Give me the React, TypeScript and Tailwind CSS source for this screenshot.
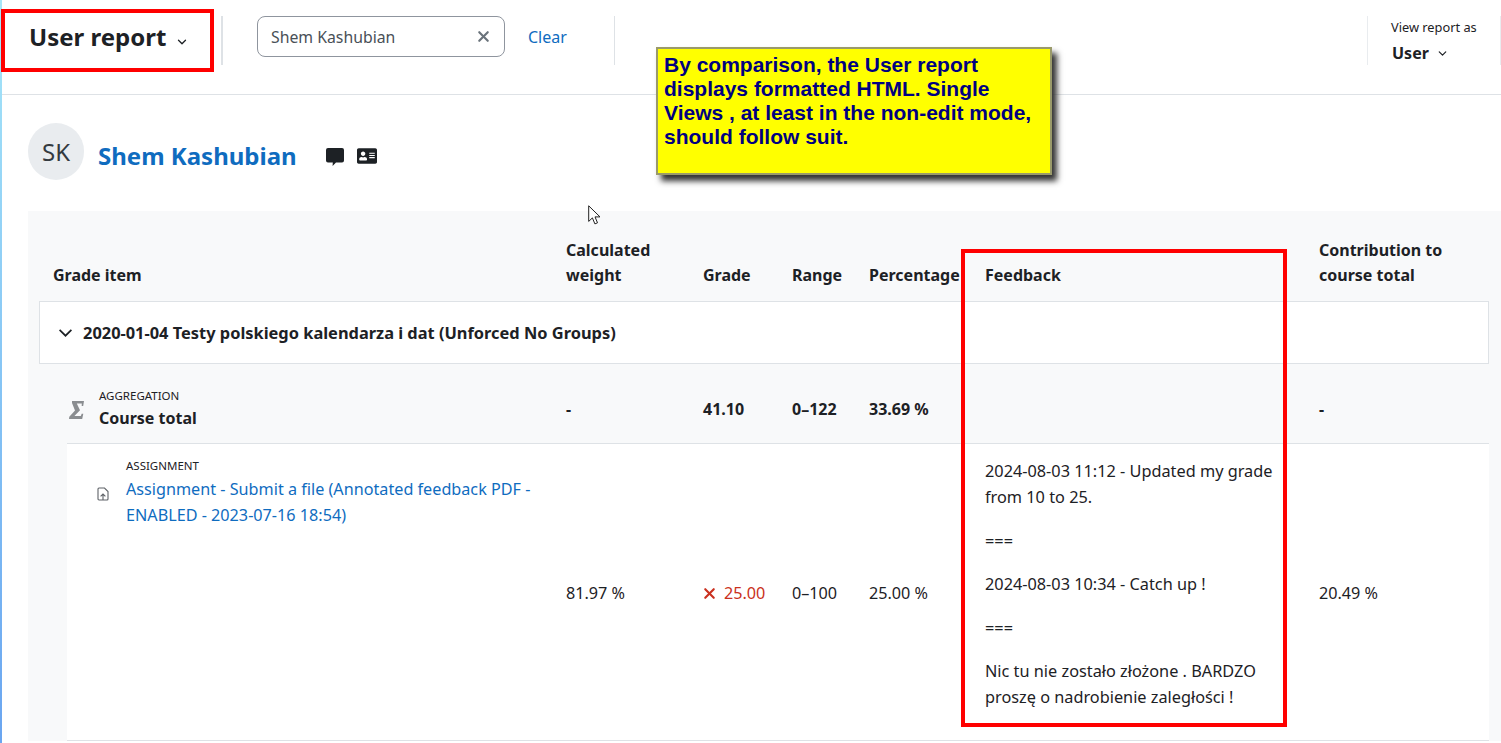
import { ChevronDown, X } from "lucide-react";
import { FaAddressCard } from "react-icons/fa";

const cols = "grid grid-cols-[538px_137px_89px_77px_116px_334px_1fr]";
const colsInner = "grid grid-cols-[499px_137px_89px_77px_116px_334px_1fr]";

export default function App() {
  return (
    <div className="relative h-[743px] w-[1501px] overflow-hidden bg-white font-['Noto_Sans','Open_Sans',sans-serif] text-[16.2px] leading-[26px] text-[#1d2125]">
      <div className="absolute left-0 top-0 h-full w-[2px] bg-linear-to-b from-[#a6e6f8] to-[#6aa5f0]" />

      {/* Top bar */}
      <header className="flex h-[95px] items-start border-b border-[#dee2e6] pt-[16px]">
        <div className="flex h-[49px] w-[223px] items-start border-r-2 border-[#dee2e6] pl-[29px]">
          <span className="text-[24px] font-bold leading-[42px]">User report</span>
          <ChevronDown className="ml-[9px] mt-[19px] h-[14px] w-[14px]" strokeWidth={2.25} />
        </div>
        <div className="ml-[34px] flex h-[41px] w-[248px] items-center justify-between rounded-[8px] border border-[#8f959e] pl-[13px] pr-[12px] text-[15.8px] text-[#495057]">
          <span>Shem Kashubian</span>
          <X className="h-[17px] w-[17px] text-[#6a737b]" strokeWidth={3} />
        </div>
        <div className="ml-[23px] flex h-[41px] w-[86px] items-center text-[16px] text-[#0f6cbf]">Clear</div>
        <div className="h-[49px] w-[1px] bg-[#dee2e6]" />
        <div className="ml-auto flex h-[49px] w-[134px] flex-col border-x border-x-[#e9ecef] pl-[23px]">
          <span className="mt-[-1px] text-[12.8px] leading-[24px]">View report as</span>
          <div className="mt-[2px] flex items-center pl-[1px]">
            <span className="text-[16px] font-bold leading-[24px]">User</span>
            <ChevronDown className="ml-[7px] h-[13px] w-[13px]" strokeWidth={2.25} />
          </div>
        </div>
      </header>

      {/* User heading */}
      <div className="flex h-[116px] items-start pl-[28px] pt-[28px]">
        <div className="flex h-[57px] w-[56px] items-center justify-center rounded-full bg-[#e9ecef] text-[24px] text-[#343a40]">SK</div>
        <a className="ml-[14px] mt-[16px] text-[24px] font-bold leading-[34px] text-[#0f6cbf]">Shem Kashubian</a>
        <svg className="ml-[29px] mt-[25px] h-[18px] w-[18px]" viewBox="0 0 18 18" fill="#1d2125">
          <path d="M2 0h14a2 2 0 0 1 2 2v10.500a2 2 0 0 1-2 2h-6L6.600 18l.2-3.500H2a2 2 0 0 1-2-2V2a2 2 0 0 1 2-2z" />
        </svg>
        <FaAddressCard className="ml-[13px] mt-[23px] h-[20px] w-[20px]" />
      </div>

      {/* Grade table */}
      <section className="ml-[28px] bg-[#f8f9fa]">
        <div className={`${cols} h-[90px] items-end pb-[13px] text-[16px] font-bold leading-[25px]`}>
          <div className="pl-[25px]">Grade item</div>
          <div>Calculated<br />weight</div>
          <div>Grade</div>
          <div>Range</div>
          <div>Percentage</div>
          <div>Feedback</div>
          <div>Contribution to<br />course total</div>
        </div>

        <div className="ml-[11px] mr-[12px] flex h-[63px] items-center border border-[#dee2e6] bg-white pl-[19px] text-[16.4px] font-bold">
          <svg className="mr-[11px] h-[8px] w-[13px]" viewBox="0 0 13 8" fill="none" stroke="#1d2125" strokeWidth="1.7">
            <path d="M.6.8 6.500 6.700 12.400.8" />
          </svg>
          2020-01-04 Testy polskiego kalendarza i dat (Unforced No Groups)
        </div>

        <div className={`${cols} h-[79px] items-center pt-[10px] text-[16px] font-bold`}>
          <div className="flex items-center pl-[39px]">
            <svg className="ml-[2px] mr-[15px] mt-[3px] h-[18px] w-[15px] shrink-0" viewBox="0 0 15 18" fill="#8a8d90">
              <path d="M3 0H15l-.8 5h-1.500l.1-2.400H7.800l3.200 6.600-5.600 5.900h6.400l.9-2.400H14.300L13.200 18H0l.3-2.300L6 9.500 3 2z" />
            </svg>
            <div className="mt-[0px]">
              <div className="text-[11.5px] font-normal leading-[18px]">AGGREGATION</div>
              <div className="leading-[26px]">Course total</div>
            </div>
          </div>
          <div>-</div>
          <div>41.10</div>
          <div>0–122</div>
          <div>33.69 %</div>
          <div />
          <div>-</div>
        </div>

        <div className={`${colsInner} ml-[39px] mr-[12px] h-[298px] items-center border-y border-[#dee2e6] bg-white pt-[2px]`}>
          <div className="flex h-full items-start pl-[30px] pt-[10px]">
            <svg className="mt-[31px] h-[14px] w-[12px] shrink-0 text-[#5f6368]" viewBox="0 0 12 14" fill="none" stroke="currentColor" strokeWidth="1.1">
              <path d="M1 2a1 1 0 0 1 1-1h5.500L11 4.500V12a1 1 0 0 1-1 1H2a1 1 0 0 1-1-1z" />
              <path d="M6 13V7M3.600 9.400 6 7l2.400 2.400" />
            </svg>
            <div className="ml-[17px] w-[420px]">
              <div className="text-[11.5px] leading-[20px]">ASSIGNMENT</div>
              <a className="text-[#0f6cbf]">Assignment - Submit a file (Annotated feedback PDF - ENABLED - 2023-07-16 18:54)</a>
            </div>
          </div>
          <div>81.97 %</div>
          <div className="flex items-center text-[#ca3120]">
            <X className="ml-[-2px] mr-[6px] h-[17px] w-[17px]" strokeWidth={3} />
            25.00
          </div>
          <div>0–100</div>
          <div>25.00 %</div>
          <div className="w-[300px] self-start pt-[12px] text-[16.3px]">
            <p>2024-08-03 11:12 - Updated my grade from 10 to 25.</p>
            <p className="mt-[18px]">===</p>
            <p className="mt-[17px]">2024-08-03 10:34 - Catch up !</p>
            <p className="mt-[18px]">===</p>
            <p className="mt-[17px]">Nic tu nie zostało złożone . BARDZO proszę o nadrobienie zaległości !</p>
          </div>
          <div>20.49 %</div>
        </div>
      </section>

      {/* Annotations on top of the screenshot */}
      <div className="absolute left-[1px] top-[9px] h-[63px] w-[213px] border-[4px] border-[#ff0000]" />
      <div className="absolute left-[961px] top-[249px] h-[478px] w-[326px] border-[4px] border-[#ff0000]" />
      <div className="absolute left-[656px] top-[47px] h-[128px] w-[396px] border-2 border-[#9a9a6a] bg-[#ffff00] pl-[6px] pt-[4px] font-['Liberation_Sans',sans-serif] text-[21px] font-bold leading-[24px] text-[#000080] shadow-[5px_6px_6px_#333]">
        By comparison, the User report<br />displays formatted HTML. Single<br />Views , at least in the non-edit mode,<br />should follow suit.
      </div>
      <svg className="absolute left-[588px] top-[205px] h-[20px] w-[13px]" viewBox="0 0 13 20">
        <path d="M.7.8v15.600l3.700-3.500 2.500 6 2.600-1.100-2.500-5.900h5z" fill="#fff" stroke="#222" strokeWidth="1" />
      </svg>
    </div>
  );
}
